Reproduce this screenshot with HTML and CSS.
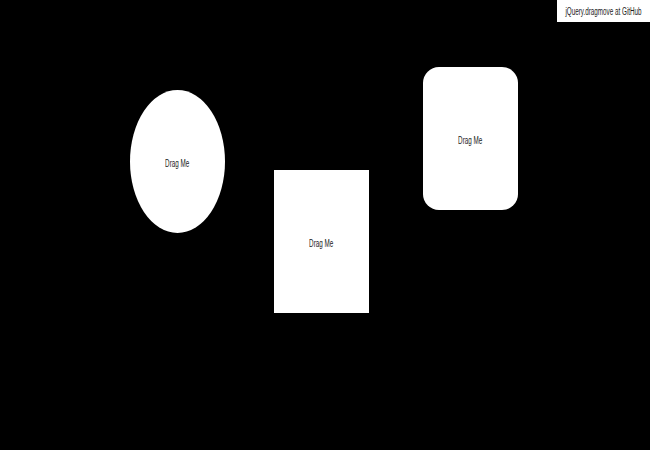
FILE: index.html
```html
<!DOCTYPE html>
<html>
<head>
<meta charset="utf-8">
<title>jQuery.dragmove</title>
<link rel="stylesheet" href="styles.css">
</head>
<body>
<a class="github" href="#"><span class="narrow">jQuery.dragmove at GitHub</span></a>
<div class="canvas">
  <div class="shape ellipse"><span class="narrow">Drag Me</span></div>
  <div class="shape rect"><span class="narrow">Drag Me</span></div>
  <div class="shape rounded"><span class="narrow">Drag Me</span></div>
</div>
</body>
</html>
```
FILE: styles.css
```css
html, body {
  margin: 0;
  padding: 0;
  background: #000;
  width: 650px;
  height: 450px;
  overflow: hidden;
  font-family: "Liberation Sans", Arial, sans-serif;
}

.canvas {
  position: relative;
  width: 650px;
  height: 450px;
}

.narrow {
  display: inline-block;
  font-size: 10px;
  line-height: 12px;
  transform: scaleX(0.63);
  white-space: nowrap;
}

.github {
  position: absolute;
  top: 0;
  right: 0;
  box-sizing: border-box;
  width: 93px;
  height: 22px;
  padding-top: 2px;
  background: #fff;
  color: #222;
  text-decoration: none;
  display: flex;
  align-items: center;
  justify-content: center;
  z-index: 2;
}

.shape {
  position: absolute;
  box-sizing: border-box;
  width: 95px;
  height: 143px;
  padding-top: 5px;
  background: #fff;
  color: #222;
  display: flex;
  align-items: center;
  justify-content: center;
}

.ellipse {
  left: 130px;
  top: 90px;
  border-radius: 50%;
}

.rect {
  left: 274px;
  top: 170px;
}

.rounded {
  left: 423px;
  top: 67px;
  border-radius: 16px;
}
```
